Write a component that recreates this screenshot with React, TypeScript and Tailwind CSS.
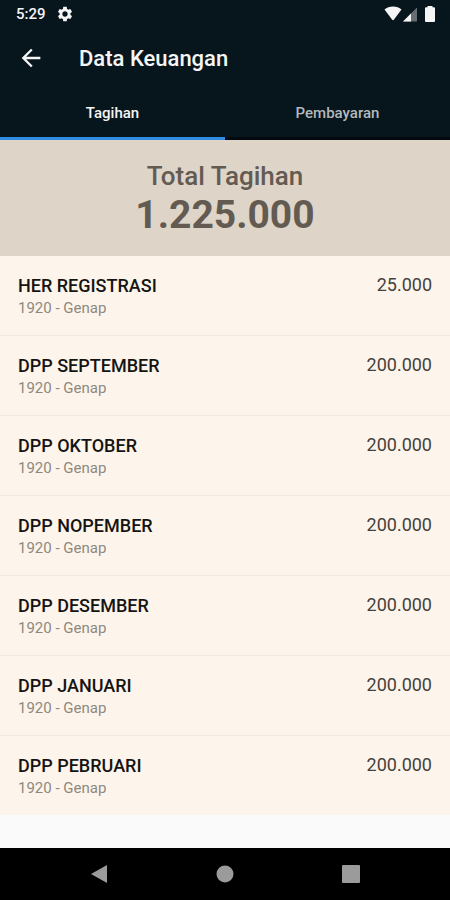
import { useState } from "react";
import { MdArrowBack, MdSettings } from "react-icons/md";

const text = {
  time: "5:29",
  title: "Data Keuangan",
  total_label: "Total Tagihan",
  total: "1.225.000",
}

const tabs = ["Tagihan", "Pembayaran"];

const bills = [
  { name: "HER REGISTRASI", period: "1920 - Genap", amount: "25.000" },
  { name: "DPP SEPTEMBER", period: "1920 - Genap", amount: "200.000" },
  { name: "DPP OKTOBER", period: "1920 - Genap", amount: "200.000" },
  { name: "DPP NOPEMBER", period: "1920 - Genap", amount: "200.000" },
  { name: "DPP DESEMBER", period: "1920 - Genap", amount: "200.000" },
  { name: "DPP JANUARI", period: "1920 - Genap", amount: "200.000" },
  { name: "DPP PEBRUARI", period: "1920 - Genap", amount: "200.000" },
];

const StatusBar = () => {
  return (
    <div className="flex h-7 items-center justify-between pl-4 pr-[15px]">
      <div className="flex items-center gap-2.5">
        <span className="text-[15px] font-medium">{text.time}</span>
        <MdSettings className="size-4.5" />
      </div>
      <div className="flex items-center">
        {/* Wifi */}
        <svg className="h-4 w-[18px]" viewBox="0 0 18 16" fill="currentColor">
          <path d="M.5 3.600C4.500-.4 13.500-.4 17.500 3.600L10 13.500Q9 14.800 8 13.500Z" />
        </svg>
        {/* Signal */}
        <svg className="ml-px h-4 w-3.5" viewBox="0 0 14 16" fill="currentColor">
          <path d="M14 1.500V15.500H0Z" fillOpacity=".4" />
          <path d="M8 7.500V15.500H0Z" />
        </svg>
        {/* Battery */}
        <svg className="ml-2 h-4 w-2.5" viewBox="0 0 10 16" fill="currentColor">
          <path d="M2.500 0h5v1.300H9a1 1 0 0 1 1 1V15a1 1 0 0 1-1 1H1a1 1 0 0 1-1-1V2.300a1 1 0 0 1 1-1h1.500Z" />
        </svg>
      </div>
    </div>
  );
};

const App = () => {
  const [active, setActive] = useState("Tagihan");

  return (
    <div className="flex min-h-screen flex-col bg-[#fafafa] font-['Roboto',sans-serif]">

      {/* Header */}
      <header className="bg-[#07151d] text-[#f5f5f5]">
        <StatusBar />
        <div className="flex h-15 items-center gap-[34px] pl-[17px]">
          <button aria-label="Kembali">
            <MdArrowBack className="size-7" />
          </button>
          <h1 className="text-[22px] font-medium">{text.title}</h1>
        </div>
        <nav className="grid grid-cols-2">
          {tabs.map((tab) => (
            <button
              key={tab}
              onClick={() => setActive(tab)}
              className={
                tab === active
                  ? "h-13 border-b-3 border-[#2f8de6] pt-0.5 text-[15px] font-medium"
                  : "h-13 border-b-3 border-[#030a0f] pt-0.5 text-[15px] font-medium text-[#b4b9bc]"
              }
            >
              {tab}
            </button>
          ))}
        </nav>
      </header>

      {/* Total */}
      <section className="bg-[#ded4c8] pt-5 pb-4.5 text-center text-[#635b52]">
        <p className="text-[26px] leading-8 font-medium">{text.total_label}</p>
        <p className="text-[39px] leading-[46px] font-bold">{text.total}</p>
      </section>

      {/* Bills */}
      <ul className="divide-y divide-[#f0eae0] bg-[#fdf5eb]">
        {bills.map((bill) => (
          <li key={bill.name} className="flex justify-between px-4.5 pt-4.5 pb-[17px]">
            <div>
              <p className="text-lg leading-6 font-medium text-[#151412]">{bill.name}</p>
              <p className="text-[15px] leading-5 text-[#8d8880]">{bill.period}</p>
            </div>
            <p className="text-lg leading-[22px] text-[#45413c]">{bill.amount}</p>
          </li>
        ))}
      </ul>

      {/* System navigation */}
      <footer className="mt-auto flex h-13 items-center justify-around bg-black px-9 text-[#9b9b9b]">
        <button aria-label="Back">
          <svg className="size-4.5" viewBox="0 0 18 18" fill="currentColor">
            <path d="M17 0V18L1 9Z" />
          </svg>
        </button>
        <button aria-label="Home">
          <svg className="size-4.5" viewBox="0 0 18 18" fill="currentColor">
            <circle cx="9" cy="9" r="8.500" />
          </svg>
        </button>
        <button aria-label="Recent">
          <svg className="size-4.5" viewBox="0 0 18 18" fill="currentColor">
            <rect width="18" height="18" rx="1" />
          </svg>
        </button>
      </footer>
    </div>
  );
};

export default App;
